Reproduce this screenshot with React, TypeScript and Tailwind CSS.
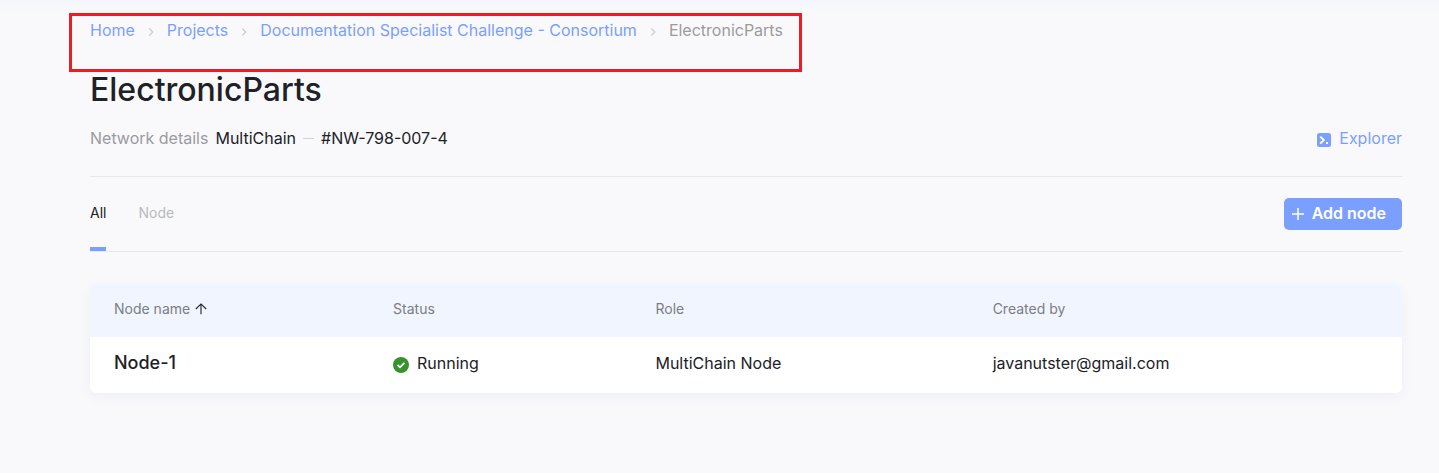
import { Fragment } from "react";

const crumbs = ["Home", "Projects", "Documentation Specialist Challenge - Consortium"];

function Chevron() {
  return (
    <svg className="mx-3 mt-1 size-2 shrink-0" viewBox="0 0 8 8" fill="none" stroke="#cdced2" strokeWidth="1.4" aria-hidden="true">
      <path d="M2.2 0.6 5.8 4 2.2 7.4" />
    </svg>
  );
}

function ExplorerIcon() {
  return (
    <svg className="mt-1 size-3.5" viewBox="0 0 14 14" fill="none" aria-hidden="true">
      <rect width="14" height="14" rx="2.5" fill="#7b9fff" />
      <path d="M3.2 3.6 6.8 7.1 3.2 10.6" stroke="#fff" strokeWidth="2" />
      <rect x="9" y="9" width="2" height="2" fill="#fff" />
    </svg>
  );
}

function PlusIcon() {
  return (
    <svg className="size-3" viewBox="0 0 12 12" stroke="#fff" strokeWidth="1.5" aria-hidden="true">
      <path d="M6 0v12M0 6h12" />
    </svg>
  );
}

function ArrowUp() {
  return (
    <svg className="size-3" viewBox="0 0 12 12" fill="none" stroke="#202126" strokeWidth="1.1" aria-hidden="true">
      <path d="M6 11.3V1M0.8 6 6 0.9 11.2 6" />
    </svg>
  );
}

function CheckIcon() {
  return (
    <svg className="mt-1 size-4" viewBox="0 0 16 16" fill="none" aria-hidden="true">
      <circle cx="8" cy="8" r="8" fill="#37932f" />
      <path d="m4.6 8 2.4 2.3L11.4 5.8" stroke="#fff" strokeWidth="1.8" />
    </svg>
  );
}

export default function App() {
  return (
    <main className="min-h-screen bg-[#f9f9fc] bg-linear-to-b from-[#f4f6fb] to-[#f9f9fc] to-[12px] pt-[18px] pr-[37px] pb-10 pl-[90px] font-['Inter','Liberation_Sans',sans-serif] text-base text-[#202126]">
      <nav aria-label="Breadcrumb" className="relative">
        <div className="pointer-events-none absolute -top-[5px] -left-[21px] h-[59px] w-[733px] border-3 border-[#ed1c24]" />
        <ol className="flex items-center leading-6">
          {crumbs.map((crumb) => (
            <Fragment key={crumb}>
              <li>
                <a href="#" className="text-[#7b9fff]">{crumb}</a>
              </li>
              <Chevron />
            </Fragment>
          ))}
          <li className="text-[#9b9b9e]" aria-current="page">ElectronicParts</li>
        </ol>
      </nav>

      <h1 className="mt-7 text-[32px] leading-10 font-medium">ElectronicParts</h1>

      <div className="mt-4 flex items-center justify-between pb-[26px] leading-6">
        <p className="flex items-center gap-[7px]">
          <span className="text-[#9b9b9e]">Network details</span>
          <span>MultiChain</span>
          <span className="h-px w-[11px] bg-[#d0d1d4]" />
          <span>#NW-798-007-4</span>
        </p>
        <a href="#" className="flex items-center gap-2 text-[#7b9fff]">
          <ExplorerIcon />
          Explorer
        </a>
      </div>

      <div className="flex items-start justify-between border-y border-[#e7e8eb] pt-[21px]">
        <div role="tablist" className="flex gap-8 text-sm leading-[30px]">
          <button role="tab" aria-selected="true" className="border-b-4 border-[#7b9fff] pb-[19px]">All</button>
          <button role="tab" aria-selected="false" className="border-b-4 border-transparent pb-[19px] text-[#b8b9bc]">Node</button>
        </div>
        <button className="flex h-8 items-center gap-2 rounded-[5px] bg-[#7b9fff] pr-4 pl-2 leading-6 font-semibold text-white">
          <PlusIcon />
          <span className="pb-[3px]">Add node</span>
        </button>
      </div>

      <div className="mt-8 overflow-hidden rounded-md bg-white shadow-[0_4px_12px_rgba(60,80,150,0.06)]">
        <table className="w-full table-fixed text-left">
          <colgroup>
            <col className="w-[23.1%]" />
            <col className="w-[20%]" />
            <col className="w-[25.7%]" />
            <col />
          </colgroup>
          <thead className="bg-[#f0f5ff] text-sm text-[#7c7d82]">
            <tr className="h-[53px]">
              <th className="pb-1 pl-6 font-normal" aria-sort="ascending">
                <button className="flex items-center gap-[5px]">
                  Node name
                  <ArrowUp />
                </button>
              </th>
              <th className="pb-1 font-normal">Status</th>
              <th className="pb-1 font-normal">Role</th>
              <th className="pb-1 font-normal">Created by</th>
            </tr>
          </thead>
          <tbody>
            <tr className="h-14">
              <td className="pb-1 pl-6 text-lg font-medium">Node-1</td>
              <td className="pb-1">
                <span className="flex items-center gap-2">
                  <CheckIcon />
                  Running
                </span>
              </td>
              <td className="pb-1">MultiChain Node</td>
              <td className="pb-1">javanutster@gmail.com</td>
            </tr>
          </tbody>
        </table>
      </div>
    </main>
  );
}
